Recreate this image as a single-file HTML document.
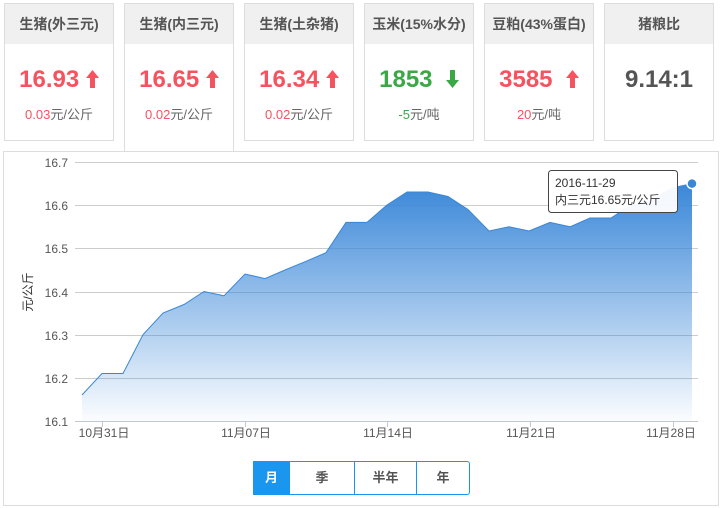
<!DOCTYPE html>
<html><head><meta charset="utf-8"><style>
body{margin:0;width:725px;height:508px;background:#fff;font-family:"Liberation Sans","Noto Sans CJK SC",sans-serif;position:relative;overflow:hidden}
.card{position:absolute;top:3px;width:108px;height:136px;border:1px solid #ddd;background:#fff}
.card .h{height:40px;background:#f0f0f0;text-align:center;line-height:40px;font-size:14px;font-weight:bold;color:#555}
.card .v{text-align:center;font-size:24px;font-weight:bold;margin-top:21px;height:30px;line-height:30px}
.card .v svg{vertical-align:-1px}
.card .s{text-align:center;font-size:13px;color:#666;margin-top:9px}
.r{color:#f5535f}.g{color:#3aa845}
.card.act{height:147px;border-bottom:none;z-index:2}
.panel{position:absolute;left:3px;top:151px;width:714px;height:353px;border:1px solid #ddd}
.btns{position:absolute;left:253px;top:461px;height:32px;display:flex;border:1px solid #1a96ef;border-radius:0 3px 3px 0}
.btns div{text-align:center;line-height:32px;font-size:13px;font-weight:bold;color:#555;border-left:1px solid #1a96ef}
</style></head><body>
<div class="card" style="left:4px"><div class="h">生猪(外三元)</div><div class="v r">16.93 <svg width="13" height="18" viewBox="0 0 13 18"><path d="M6.5,0 L13,8 L9,8 L9,18 L4,18 L4,8 L0,8Z" fill="#f5535f"/></svg></div><div class="s"><span class="r">0.03</span>元/公斤</div></div>
<div class="card act" style="left:124px"><div class="h">生猪(内三元)</div><div class="v r">16.65 <svg width="13" height="18" viewBox="0 0 13 18"><path d="M6.5,0 L13,8 L9,8 L9,18 L4,18 L4,8 L0,8Z" fill="#f5535f"/></svg></div><div class="s"><span class="r">0.02</span>元/公斤</div></div>
<div class="card" style="left:244px"><div class="h">生猪(土杂猪)</div><div class="v r">16.34 <svg width="13" height="18" viewBox="0 0 13 18"><path d="M6.5,0 L13,8 L9,8 L9,18 L4,18 L4,8 L0,8Z" fill="#f5535f"/></svg></div><div class="s"><span class="r">0.02</span>元/公斤</div></div>
<div class="card" style="left:364px"><div class="h">玉米(15%水分)</div><div class="v g">1853 &nbsp;<svg width="13" height="18" viewBox="0 0 13 18"><path d="M6.5,18 L13,10 L9,10 L9,0 L4,0 L4,10 L0,10Z" fill="#3aa845"/></svg></div><div class="s"><span class="g">-5</span>元/吨</div></div>
<div class="card" style="left:484px"><div class="h">豆粕(43%蛋白)</div><div class="v r">3585 &nbsp;<svg width="13" height="18" viewBox="0 0 13 18"><path d="M6.5,0 L13,8 L9,8 L9,18 L4,18 L4,8 L0,8Z" fill="#f5535f"/></svg></div><div class="s"><span class="r">20</span>元/吨</div></div>
<div class="card" style="left:604px"><div class="h">猪粮比</div><div class="v" style="color:#555">9.14:1</div></div>
<div class="panel"></div>
<svg style="position:absolute;left:0;top:0" width="725" height="508">
<defs><linearGradient id="gr" x1="0" y1="0" x2="0" y2="1"><stop offset="0" stop-color="#3a87d8"/><stop offset="1" stop-color="#3a87d8" stop-opacity="0.02"/></linearGradient></defs>
<g stroke="#ccc" stroke-width="1">
<line x1="75" y1="162.5" x2="698" y2="162.5"/><line x1="75" y1="205.5" x2="698" y2="205.5"/><line x1="75" y1="248.5" x2="698" y2="248.5"/><line x1="75" y1="292.5" x2="698" y2="292.5"/><line x1="75" y1="335.5" x2="698" y2="335.5"/><line x1="75" y1="378.5" x2="698" y2="378.5"/>
</g>
<path d="M82,395 L102,373.5 L123,373.5 L143,334.7 L163,313 L184,304.5 L204,291.5 L224,295.8 L245,274 L265,278.6 L285,270 L306,261.3 L326,252.7 L346,222.4 L367,222.4 L387,205 L407,192 L428,192 L448,196.5 L468,209.5 L489,231 L509,226.8 L529,231 L550,222.4 L570,226.8 L590,218 L611,218 L631,205 L651,201 L672,188 L692,183.6 L692,421 L82,421Z" fill="url(#gr)"/>
<path d="M82,395 L102,373.5 L123,373.5 L143,334.7 L163,313 L184,304.5 L204,291.5 L224,295.8 L245,274 L265,278.6 L285,270 L306,261.3 L326,252.7 L346,222.4 L367,222.4 L387,205 L407,192 L428,192 L448,196.5 L468,209.5 L489,231 L509,226.8 L529,231 L550,222.4 L570,226.8 L590,218 L611,218 L631,205 L651,201 L672,188 L692,183.6" fill="none" stroke="#3a87d8" stroke-width="1"/>
<line x1="75" y1="421.5" x2="698" y2="421.5" stroke="#c0c8d8"/>
<g stroke="#c0c8d8"><line x1="102.5" y1="421" x2="102.5" y2="427"/><line x1="245.5" y1="421" x2="245.5" y2="427"/><line x1="387.5" y1="421" x2="387.5" y2="427"/><line x1="530.5" y1="421" x2="530.5" y2="427"/><line x1="673.5" y1="421" x2="673.5" y2="427"/></g>
<g font-size="12" fill="#555" text-anchor="end" font-family="Liberation Sans,sans-serif">
<text x="68" y="167">16.7</text><text x="68" y="210">16.6</text><text x="68" y="253">16.5</text><text x="68" y="297">16.4</text><text x="68" y="340">16.3</text><text x="68" y="383">16.2</text><text x="68" y="426">16.1</text></g>
<g font-size="12" fill="#555" text-anchor="middle" font-family="Liberation Sans,Noto Sans CJK SC,sans-serif">
<text x="104" y="437">10月31日</text><text x="246" y="437">11月07日</text><text x="388" y="437">11月14日</text><text x="531" y="437">11月21日</text><text x="671" y="437">11月28日</text></g>
<text transform="translate(32,292) rotate(-90)" font-size="12" fill="#333" text-anchor="middle" font-family="Liberation Sans,Noto Sans CJK SC,sans-serif">元/公斤</text>
<rect x="548.5" y="170.5" width="129" height="42" rx="3" fill="#fff" fill-opacity="0.95" stroke="#444"/>
<text x="555" y="187" font-size="12" fill="#333" font-family="Liberation Sans,Noto Sans CJK SC,sans-serif">2016-11-29</text>
<text x="555" y="204" font-size="12" fill="#333" font-family="Liberation Sans,Noto Sans CJK SC,sans-serif">内三元16.65元/公斤</text>
<circle cx="692" cy="183.6" r="5" fill="#3a87d8" stroke="#fff" stroke-width="1.5"/>
</svg>
<div class="btns"><div style="width:35px;background:#1a96ef;color:#fff;border-left:none">月</div><div style="width:64px">季</div><div style="width:61px">半年</div><div style="width:52px">年</div></div>
</body></html>
